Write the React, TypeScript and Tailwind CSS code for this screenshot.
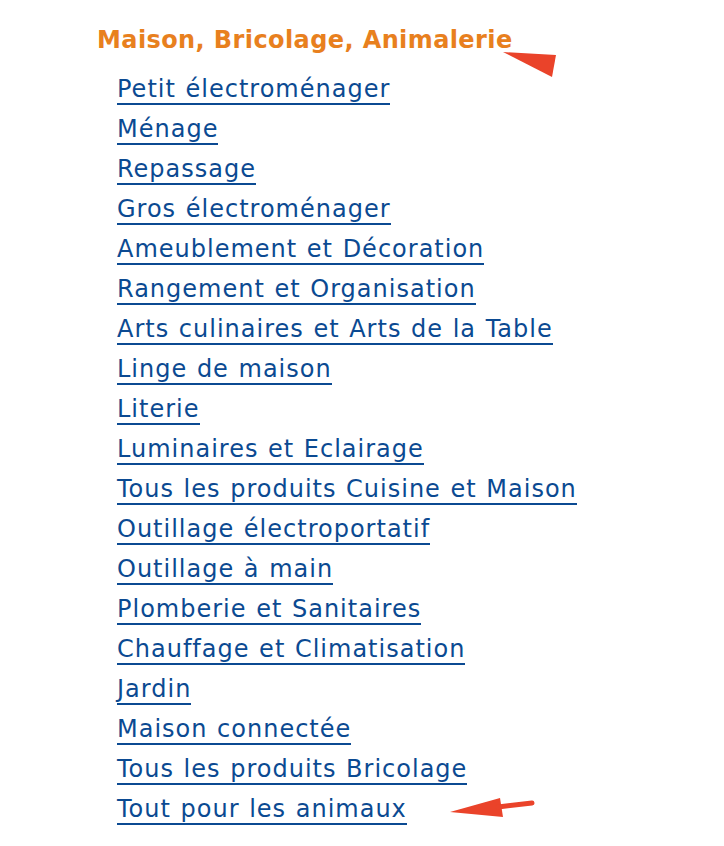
const items = [
  "Petit électroménager",
  "Ménage",
  "Repassage",
  "Gros électroménager",
  "Ameublement et Décoration",
  "Rangement et Organisation",
  "Arts culinaires et Arts de la Table",
  "Linge de maison",
  "Literie",
  "Luminaires et Eclairage",
  "Tous les produits Cuisine et Maison",
  "Outillage électroportatif",
  "Outillage à main",
  "Plomberie et Sanitaires",
  "Chauffage et Climatisation",
  "Jardin",
  "Maison connectée",
  "Tous les produits Bricolage",
  "Tout pour les animaux",
];

export default function App() {
  return (
    <div className="relative w-[724px] h-[846px] bg-white font-['DejaVu_Sans',Verdana,sans-serif]">
      <div className="pl-[97px] pt-[26px]">
        <h2 className="text-[24px] font-bold leading-[28px] tracking-[0.4px] text-[#e8801e]">
          Maison, Bricolage, Animalerie
        </h2>
        <ul className="mt-[21px] pl-[20px] flex flex-col gap-[10px]">
          {items.map((t) => (
            <li key={t} className="flex">
              <a
                href="#"
                className="inline-block text-[24px] leading-[28px] tracking-[1px] [word-spacing:1px] text-[#0b4a92] border-b-2 border-[#0b4a92]"
              >
                {t}
              </a>
            </li>
          ))}
        </ul>
      </div>

      {/* annotation arrows */}
      <svg className="absolute left-0 top-0 pointer-events-none" width="724" height="846">
        <polygon points="503,52 556,55 552,77" fill="#ea432a" />
        <polygon points="450,812 500,798 503,817" fill="#ea432a" />
        <path d="M498,807 L532,803" stroke="#ea432a" strokeWidth="5" strokeLinecap="round" />
      </svg>
    </div>
  );
}
